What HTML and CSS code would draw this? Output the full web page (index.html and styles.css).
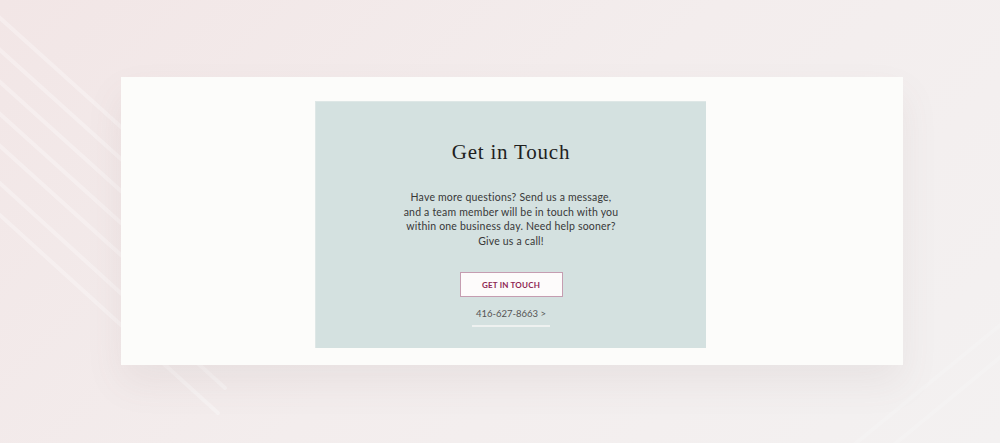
FILE: index.html
```html
<!DOCTYPE html>
<html lang="en">
<head>
  <meta charset="UTF-8" />
  <meta name="viewport" content="width=device-width, initial-scale=1.0" />
  <title>Get in Touch</title>
  <link rel="stylesheet" href="styles.css">
</head>
<body>
  <svg class="stripes stripes-left" width="240" height="443" viewBox="0 0 240 443">
    <line x1="-20" y1="0" x2="222" y2="218" />
    <line x1="-20" y1="32" x2="222" y2="250" />
    <line x1="-20" y1="64" x2="222" y2="282" />
    <line x1="-20" y1="96" x2="222" y2="314" />
    <line x1="-20" y1="128" x2="222" y2="346" />
    <line x1="-20" y1="165" x2="225" y2="388" />
    <line x1="-20" y1="197" x2="218" y2="413" />
  </svg>
  <svg class="stripes stripes-right" width="160" height="130" viewBox="0 0 160 130">
    <line x1="10" y1="135" x2="175" y2="0" />
    <line x1="50" y1="135" x2="175" y2="32" />
  </svg>

  <div class="page">
    <div class="card">
      <div class="panel">
        <h1>Get in Touch</h1>
        <p>Have more questions? Send us a message,<br>
          and a team member will be in touch with you<br>
          within one business day. Need help sooner?<br>
          Give us a call!</p>
        <a class="btn" href="#">GET IN TOUCH</a>
        <a class="phone" href="#">416-627-8663 &gt;</a>
      </div>
    </div>
  </div>
</body>
</html>
```

FILE: styles.css
```css
* { box-sizing: border-box; margin: 0; padding: 0; }
body {
  font-family: "Lato", sans-serif;
  background: linear-gradient(135deg, #f2e6e6 0%, #f3eded 50%, #f3f1f1 100%);
  height: 443px;
  overflow: hidden;
  position: relative;
}
.stripes {
  position: absolute;
  stroke: rgba(255, 255, 255, 0.3);
  stroke-width: 4;
  stroke-linecap: round;
}
.stripes-left { left: 0; top: 0; }
.stripes-right { right: 0; bottom: 0; stroke: rgba(255, 255, 255, 0.15); }
.page {
  position: relative;
  padding-top: 77px;
  padding-left: 121px;
}
.card {
  width: 782px;
  height: 288px;
  background: #fcfcfa;
  padding-top: 24px;
  padding-left: 194px;
  box-shadow: 0 18px 36px rgba(110, 90, 90, 0.08);
}
.panel {
  width: 391px;
  height: 247px;
  background: #d4e1e0;
  border-top: 1px solid #dee7e6;
  border-left: 1px solid #dee7e6;
  display: flex;
  flex-direction: column;
  align-items: center;
  text-align: center;
  padding-top: 36px;
}
h1 {
  font-family: "Liberation Serif", serif;
  font-weight: normal;
  font-size: 21px;
  line-height: 28px;
  letter-spacing: 0.8px;
  color: #1f1f1f;
}
p {
  margin-top: 24px;
  font-size: 10.5px;
  line-height: 14.6px;
  letter-spacing: 0.2px;
  color: #383838;
}
.btn {
  margin-top: 24px;
  width: 103px;
  height: 25px;
  border: 1px solid #c59db1;
  background: #fdfbfb;
  color: #8e2552;
  font-size: 8px;
  font-weight: bold;
  letter-spacing: 0.2px;
  text-decoration: none;
  display: flex;
  align-items: center;
  justify-content: center;
}
.phone {
  margin-top: 11px;
  font-size: 9.5px;
  line-height: 12px;
  color: #555;
  text-decoration: none;
  padding: 0 4px 5px;
  border-bottom: 2px solid #eef1f0;
}
```
